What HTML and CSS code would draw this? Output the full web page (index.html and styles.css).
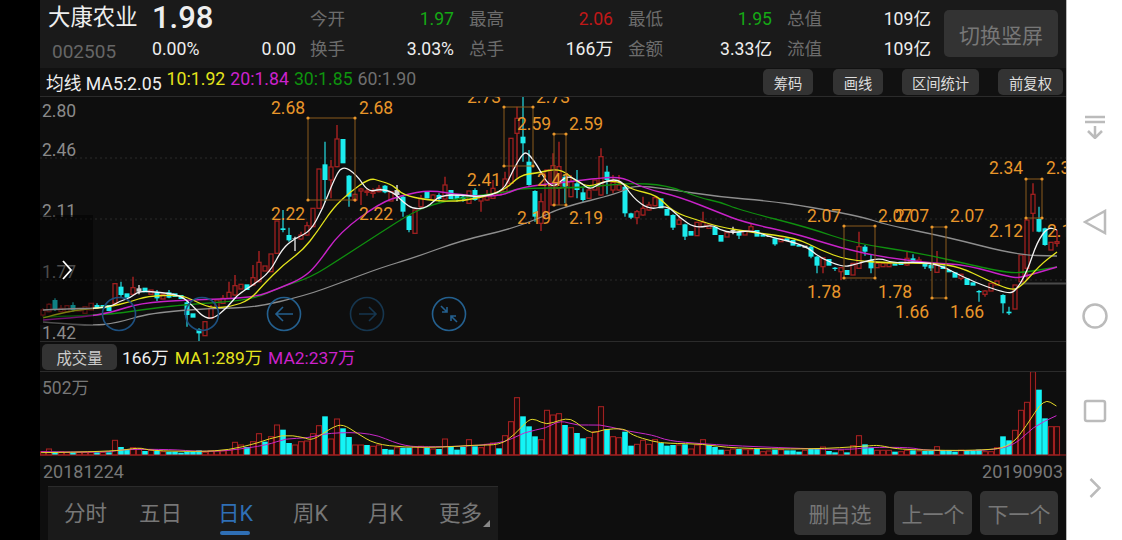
FILE: index.html
```html
<!DOCTYPE html>
<html lang="zh-CN">
<head>
    <meta charset="UTF-8">
    <title>大康农业</title>
    <link rel="stylesheet" href="styles.css">
</head>
<body>
    <div class="screen">
        <div class="main">
            <!-- 行情头部 -->
            <div class="quote">
                <div class="stock-id">
                    <div class="stock-name">大康农业</div>
                    <div class="stock-code">002505</div>
                </div>
                <div class="stock-price">
                    <div class="price">1.98</div>
                    <div class="change"><span>0.00%</span><span>0.00</span></div>
                </div>
                <div class="stats">
                    <div class="stat"><span class="stat-label">今开</span><span class="green">1.97</span></div>
                    <div class="stat"><span class="stat-label">最高</span><span class="red">2.06</span></div>
                    <div class="stat"><span class="stat-label">最低</span><span class="green">1.95</span></div>
                    <div class="stat"><span class="stat-label">总值</span><span>109亿</span></div>
                    <div class="stat"><span class="stat-label">换手</span><span>3.03%</span></div>
                    <div class="stat"><span class="stat-label">总手</span><span>166万</span></div>
                    <div class="stat"><span class="stat-label">金额</span><span>3.33亿</span></div>
                    <div class="stat"><span class="stat-label">流值</span><span>109亿</span></div>
                </div>
                <button class="btn rotate-btn">切换竖屏</button>
            </div>

            <!-- 均线 -->
            <div class="ma-bar">
                <div class="ma-values">
                    <span>均线 MA5:2.05</span>
                    <span class="yellow">10:1.92</span>
                    <span class="magenta">20:1.84</span>
                    <span class="dark-green">30:1.85</span>
                    <span class="gray">60:1.90</span>
                </div>
                <button class="tool-btn tool-chip">筹码</button>
                <button class="tool-btn tool-line">画线</button>
                <button class="tool-btn tool-range">区间统计</button>
                <button class="tool-btn tool-adjust">前复权</button>
            </div>

            <svg id="kline" class="kline" viewBox="40 97 1026 244"></svg>

            <!-- 成交量 -->
            <div class="vol-bar">
                <button class="tool-btn vol-btn">成交量</button>
                <span>166万</span>
                <span class="yellow">MA1:289万</span>
                <span class="magenta">MA2:237万</span>
            </div>
            <div class="vol-panel">
                <div class="vol-max">502万</div>
                <svg id="volume" class="volume" viewBox="40 372 1026 84"></svg>
            </div>
            <div class="dates"><span>20181224</span><span>20190903</span></div>

            <!-- 底部 -->
            <div class="bottom">
                <div class="tabs">
                    <div class="tab">分时</div>
                    <div class="tab">五日</div>
                    <div class="tab active">日K</div>
                    <div class="tab">周K</div>
                    <div class="tab">月K</div>
                    <div class="tab more">更多</div>
                </div>
                <div class="actions">
                    <button class="btn act-del">删自选</button>
                    <button class="btn act-nav">上一个</button>
                    <button class="btn act-nav">下一个</button>
                </div>
            </div>
        </div>

        <!-- 系统导航栏 -->
        <div class="navbar">
            <div class="nav-item">
                <svg width="24" height="24" viewBox="0 0 24 24"><path d="M2 2h20M2 7h20M12 11v12M5 16l7 7 7-7"/></svg>
            </div>
            <div class="nav-item">
                <svg width="24" height="26" viewBox="0 0 24 26"><path d="M22 2v22L2 13z"/></svg>
            </div>
            <div class="nav-item">
                <svg width="26" height="26" viewBox="0 0 26 26"><circle cx="13" cy="13" r="11.5"/></svg>
            </div>
            <div class="nav-item">
                <svg width="24" height="24" viewBox="0 0 24 24"><rect x="2" y="2" width="20" height="20" rx="2"/></svg>
            </div>
            <div class="nav-item nav-last">
                <svg width="12" height="20" viewBox="0 0 12 20"><path d="M1.5 1l9 9-9 9"/></svg>
            </div>
        </div>
    </div>
    <script src="chart.js"></script>
</body>
</html>
```

FILE: styles.css
```css
* {
    box-sizing: border-box;
}
body {
    margin: 0;
    background-color: #000;
    font-family: 'Roboto', 'Noto Sans CJK SC', sans-serif;
    color: #eee;
    overflow: hidden;
}
button {
    font-family: inherit;
    border: none;
    padding: 0;
}
.screen {
    display: flex;
    width: 1122px;
    height: 540px;
    padding-left: 40px;
}
.main {
    width: 1026px;
    height: 540px;
    background-color: #0e0e0e;
    display: flex;
    flex-direction: column;
}

/* 行情头部 */
.quote {
    height: 68px;
    flex: none;
    background-color: #1a1a1a;
    display: flex;
    align-items: flex-start;
    padding-left: 8px;
}
.stock-id {
    width: 104px;
}
.stock-name {
    font-size: 22.4px;
    line-height: 35px;
}
.stock-code {
    font-size: 19px;
    line-height: 34px;
    color: #666;
    padding-left: 4px;
}
.stock-price {
    width: 144px;
}
.price {
    font-size: 31px;
    font-weight: 500;
    line-height: 36px;
}
.change {
    display: flex;
    justify-content: space-between;
    font-size: 17.7px;
    line-height: 26px;
}
.stats {
    margin-left: 14px;
    margin-top: 4px;
    display: grid;
    grid-template-columns: repeat(4, 144px);
    column-gap: 15px;
    font-size: 17.6px;
    line-height: 30px;
}
.stat {
    display: flex;
    justify-content: space-between;
}
.stat-label {
    color: #6c6c6c;
}
.green {
    color: #15a815;
}
.red {
    color: #c01818;
}
.btn {
    background-color: #333;
    color: #777;
    border-radius: 5px;
    font-size: 21px;
}
.rotate-btn {
    width: 114px;
    height: 47px;
    margin-top: 10px;
    margin-left: 13px;
}

/* 均线 */
.ma-bar {
    height: 29px;
    flex: none;
    background-color: #111;
    border-bottom: 1px solid #2b2b2b;
    display: flex;
    align-items: center;
    padding-left: 6px;
    font-size: 17.7px;
}
.ma-values {
    display: flex;
    column-gap: 5px;
    width: 717px;
}
.yellow {
    color: #e4e41c;
}
.magenta {
    color: #cc22cc;
}
.dark-green {
    color: #0e930e;
}
.gray {
    color: #6f6f6f;
}
.tool-btn {
    height: 26px;
    background-color: #333;
    color: #ddd;
    border-radius: 5px;
    font-size: 14.3px;
}
.tool-chip {
    width: 50px;
}
.tool-line {
    width: 50px;
    margin-left: 20px;
}
.tool-range {
    width: 77px;
    margin-left: 19px;
}
.tool-adjust {
    width: 65px;
    margin-left: 19px;
}
.kline {
    display: block;
    width: 1026px;
    height: 244px;
    flex: none;
}
.kline text {
    font-size: 17.5px;
}

/* 成交量 */
.vol-bar {
    height: 31px;
    flex: none;
    border-top: 1px solid #2b2b2b;
    border-bottom: 1px solid #2b2b2b;
    display: flex;
    align-items: center;
    padding-left: 2px;
    column-gap: 6px;
    font-size: 17.4px;
}
.vol-btn {
    width: 75px;
    color: #ccc;
    font-size: 15.4px;
    margin-right: -1px;
}
.vol-panel {
    position: relative;
    height: 84px;
    flex: none;
}
.vol-max {
    position: absolute;
    left: 2px;
    top: 5px;
    font-size: 17.5px;
    line-height: 22px;
    color: #777;
}
.volume {
    display: block;
    width: 1026px;
    height: 84px;
}
.dates {
    height: 30px;
    flex: none;
    display: flex;
    justify-content: space-between;
    align-items: center;
    padding: 1px 3px 0;
    font-size: 18px;
    color: #777;
}

/* 底部 */
.bottom {
    flex: 1;
    display: flex;
    justify-content: space-between;
}
.tabs {
    width: 450px;
    margin-left: 8px;
    background-color: #1a1a1a;
    border-top: 1px solid #2b2b2b;
    display: flex;
    align-items: flex-start;
}
.tab {
    position: relative;
    flex: none;
    width: 75px;
    text-align: center;
    font-size: 21.5px;
    line-height: 54px;
    color: #777;
}
.tab.active {
    color: #2f6fb5;
}
.tab.active::after {
    content: "";
    position: absolute;
    left: 22px;
    top: 44px;
    width: 30px;
    height: 4px;
    border-radius: 2px;
    background-color: #2f6fb5;
}
.tab.more::after {
    content: "";
    position: absolute;
    left: 60px;
    top: 33px;
    border-left: 7px solid transparent;
    border-bottom: 7px solid #888;
}
.actions {
    display: flex;
    column-gap: 8px;
    padding: 5px 8px 0 0;
}
.actions .btn {
    height: 44px;
    width: 78px;
}
.actions .act-del {
    width: 92px;
}

/* 系统导航栏 */
.navbar {
    width: 56px;
    height: 540px;
    background-color: #fff;
    border-left: 1px solid #b9b9b9;
    padding-top: 80px;
}
.nav-item {
    height: 94.5px;
    display: flex;
    align-items: center;
    justify-content: center;
}
.nav-last {
    height: 60px;
}
.navbar svg {
    fill: none;
    stroke: #bbb;
    stroke-width: 2.5px;
}
```

FILE: chart.js
```js
// K线数据: [颜色, 实体上, 实体下, 最高, 最低] (y 为绘图坐标 * 3)
const candles = [
    ['r',645,660,640,665],['r',628,650,625,652],['c',615,645,610,648],['r',640,650,630,652],['r',632,650],['c',630,645,622,650],
    ['r',640,648],['r',635,655],['r',625,645],['c',630,640,625,642],['c',630,640],['c',630,648],
    ['r',566,625,565,630],['c',575,600,560,605],['c',595,608],['r',578,598,545,600],['w',580,590,570,598],['c',578,592],
    ['r',585,598],['c',592,610,585,618],['r',598,612],['c',592,608,585,610],['c',595,606],['c',600,612],
    ['c',622,660,615,695],['c',655,668],['c',703,715,700,738],['r',680,722],['r',640,670,630,672],['r',615,640],
    ['r',610,625,600,627],['r',592,610,560,612],['r',572,600,540,602],['r',568,582],['c',568,585],['r',548,570,510,572],
    ['r',502,560,468,562],['r',513,528],['r',477,530],['r',378,475],['c',400,405,345,412],['c',420,436,398,440],
    ['w',430,432,425,468],['r',420,432,410,434],['r',392,420,380,422],['r',340,395],['r',222,340],['c',208,255,140,320],
    ['r',216,255,195,310],['r',132,215,90,217],['c',132,205],['c',242,305,240,335],['r',298,315,296,320],['r',282,288,278,330],
    ['r',288,292,280,302],['r',290,295,280,308],['r',280,290,270,292],
    ['c',272,292,270,295],['r',290,318],['w',285,300,270,318],['c',305,350,303,365],['c',362,405,360,412],['r',345,415],
    ['r',310,335,300,337],['c',288,310],['r',300,315,298,317],['c',300,312,295,320],['r',270,312,245,314],['c',285,312],
    ['c',300,312,298,320],['c',305,312,303,320],['r',288,325],['c',285,315,280,317],['r',302,318,300,350],['r',305,315,285,317],
    ['r',280,310,255,312],['r',290,300],['r',252,290,230,292],['r',130,265],['r',70,115,35,250],['c',125,145,5,200],
    ['c',200,270,165,272],['c',288,365,286,380],['r',320,385,295,408],['r',225,370],['r',212,330,175,332],['r',215,280,140,330],
    ['c',245,275,240,325],['r',260,305,240,307],['c',265,285,225,310],['c',292,315,280,320],['r',285,310,270,312],['r',255,285],
    ['r',185,300,160,302],['c',230,255,212,298],['r',262,285,240,295],['r',270,285,240,287],['c',275,355,273,365],['c',355,368,353,372],
    ['r',350,368,345,388],['r',340,360,305,362],['r',330,345,320,347],['r',308,332,305,334],['c',310,340],['c',342,362],
    ['c',360,398,358,405],['r',375,388,360,390],['c',388,425,386,435],['c',408,422],['r',382,422],['r',382,395,350,397],
    ['r',390,400],['c',395,420],['c',420,440],['r',413,426],['w',405,410,395,418],['c',410,422,408,432],
    ['r',408,420],['r',395,408,385,410],['c',405,425],['c',418,425],['w',422,426],['c',430,448,428,452],
    ['r',430,440],['c',430,438],['c',435,452],['c',450,455],['w',452,458],['c',455,485,450,490],
    ['c',485,512,483,535],['r',488,515,486,535],['c',492,512],['c',518,522,516,528],['r',518,530,516,555],['c',525,540],
    ['r',505,540],['r',455,520,410,522],['c',455,470,450,482],['c',495,520,480,535],['r',505,518],['r',505,515],
    ['r',505,515],['c',505,512],['c',500,510],['r',490,510,470,512],['c',490,500,478,502],['r',495,502,485,504],
    ['c',505,515,503,522],['c',510,520,508,528],['r',510,532,468,534],['c',512,522],['c',525,532],['c',532,548],
    ['r',538,550,536,555],['c',550,570],['c',562,572],['c',588,592,585,620],['r',588,598,586,605],['r',565,588],
    ['r',558,570],['c',600,625,598,655],['c',650,655,635,660],['r',570,642],['r',480,560],['r',375,520,373,555],
    ['r',298,355,265,410],['c',372,410,335,412],['c',400,450,398,452],['r',442,465],['r',440,445,405,455]
];

// 均线
const maLines = [
    ['#8e8e8e', 1.3, [[43,322],[90,326],[117,323],[150,313],[213,308],[253,308],[307,295],[340,283],[380,268],[413,258],[463,240],[507,230],[540,218],[560,208],[620,193],[633,185],[667,189],[720,197],[770,201],[810,207],[863,217],[887,225],[947,237],[1017,255],[1057,256]]],
    ['#0f8f0f', 1.3, [[43,317],[107,315],[140,310],[180,305],[253,300],[280,287],[310,278],[343,257],[380,233],[413,212],[440,202],[480,195],[507,192],[523,188],[580,188],[627,183],[667,185],[700,198],[720,202],[740,210],[810,228],[853,243],[920,253],[980,267],[1010,273],[1027,272],[1057,267]]],
    ['#c822c8', 1.4, [[43,320],[83,317],[110,313],[140,303],[187,300],[253,298],[280,288],[303,278],[317,265],[340,232],[380,203],[403,195],[430,190],[460,195],[500,197],[520,187],[567,182],[600,178],[623,177],[643,188],[680,197],[720,213],[743,222],[797,234],[840,248],[887,258],[933,263],[967,265],[1013,278],[1023,277],[1057,267]]],
    ['#e4e41c', 1.3, [[43,318],[67,311],[108,307],[130,302],[147,296],[180,295],[193,300],[210,308],[230,307],[250,300],[263,285],[283,265],[303,250],[317,232],[333,208],[350,192],[370,178],[380,181],[393,185],[403,195],[427,200],[460,202],[503,192],[520,175],[537,173],[560,168],[577,182],[590,187],[607,180],[623,183],[633,190],[657,195],[673,212],[697,220],[720,227],[750,232],[797,238],[820,250],[847,260],[887,263],[933,263],[960,267],[987,280],[1010,290],[1020,288],[1040,265],[1057,252]]],
    ['#f4f4f4', 1.3, [[43,310],[60,309],[108,308],[120,301],[130,298],[139,291],[157,292],[180,295],[192,305],[203,317],[213,319],[227,308],[237,295],[253,285],[270,272],[282,249],[295,238],[310,232],[323,208],[333,182],[342,165],[357,175],[368,192],[380,189],[393,192],[403,202],[413,209],[427,208],[440,195],[463,195],[480,197],[503,192],[513,170],[523,153],[528,153],[537,165],[547,183],[555,187],[567,175],[580,182],[590,190],[600,183],[620,178],[633,198],[650,210],[667,205],[680,218],[695,228],[713,225],[720,230],[733,233],[752,230],[770,237],[805,245],[820,258],[843,267],[853,265],[863,262],[880,258],[893,263],[920,262],[940,265],[963,277],[987,287],[1007,293],[1015,292],[1027,272],[1037,242],[1048,227],[1057,230]]]
];

// 最高最低标注框
const boxes = [
    [308,118,355,200], [504,107,533,166], [554,134,566,205],
    [844,226,875,278], [932,227,946,298], [1026,179,1042,218]
];
const marks = [
    [271,114,'2.68'],[359,114,'2.68'],[271,220,'2.22'],[359,220,'2.22'],
    [467,103,'2.73'],[536,103,'2.73'],[467,186,'2.41'],[537,186,'2.41'],
    [517,130,'2.59'],[569,130,'2.59'],[517,224,'2.19'],[569,224,'2.19'],
    [807,222,'2.07'],[878,222,'2.07'],[895,222,'2.07'],[950,222,'2.07'],
    [807,298,'1.78'],[878,298,'1.78'],[895,318,'1.66'],[950,318,'1.66'],
    [989,174,'2.34'],[1046,174,'2.34'],[989,237,'2.12'],[1047,237,'2.12']
];
const axis = [[42,117,'2.80'],[42,156,'2.46'],[42,217,'2.11'],[42,278,'1.77'],[42,339,'1.42']];

// 成交量 (负数为绿柱)
const volumes = [
    10,18,-10,10,8,-8,8,8,8,-8,8,-8,44,-24,-15,22,20,-12,14,-12,10,-10,-10,-7,-10,-10,-14,8,12,12,12,14,38,30,-24,40,64,-40,55,90,
    -76,-36,30,40,42,64,88,-116,48,108,-80,-54,30,30,-30,26,30,-18,-16,22,-22,-22,25,26,-22,18,-18,48,-24,-16,-24,46,-26,22,32,36,-20,58,100,172,
    -116,-86,-56,46,134,120,124,-90,82,-66,-50,52,70,145,-78,55,52,-70,-28,32,44,32,46,-36,-28,-30,30,-32,18,30,46,-30,-24,-16,14,18,-18,16,16,
    -18,10,12,-16,16,-14,-14,-10,14,-18,-20,24,-12,-8,14,-8,28,58,-32,-22,14,14,14,-10,10,14,-14,12,-12,-12,25,-14,-12,-10,14,-12,-12,-16,10,10,22,
    -56,-44,74,134,158,250,-196,-110,85,85
];
const volYellow = [
    [115,338],[320,335],[390,322],[420,332],[560,335],[640,330],[720,310],[790,283],[850,292],[875,302],[930,262],[960,252],[1000,280],[1050,312],[1130,322],[1240,322],[1330,315],[1400,315],[1440,285],[1480,238],[1500,238],[1530,255],[1568,240]
].map(p => [p[0] / 2.8, 340 + p[1] / 3]).concat([
    [30,235],[60,260],[90,282],[120,268],[180,265],[200,285],[260,305],[300,310],[400,312],[480,325],[700,328],[860,318],[890,315],[950,330],[1200,332],[1260,315],[1300,260],[1350,175],[1385,198]
].map(p => [560 + p[0] / 2.79, 340 + p[1] / 3]));
const volMagenta = [
    [115,335],[300,338],[340,328],[480,328],[560,335],[640,332],[750,315],[800,295],[860,295],[920,278],[1040,278],[1120,315],[1180,322],[1400,315],[1470,275],[1530,265],[1568,240]
].map(p => [p[0] / 2.8, 340 + p[1] / 3]).concat([
    [50,258],[110,252],[180,272],[260,285],[300,302],[400,312],[540,320],[800,330],[860,322],[980,322],[1020,332],[1200,332],[1270,315],[1320,260],[1385,227]
].map(p => [560 + p[0] / 2.79, 340 + p[1] / 3]));

const RED = '#a02020';
const CYAN = '#1cecee';
const ORANGE = '#e8962a';
const BLUE = '#1d5080';

// 折线取中点做平滑
function smooth(pts) {
    let d = 'M' + pts[0][0] + ' ' + pts[0][1];
    for (let i = 1; i < pts.length - 1; i++) {
        const mx = (pts[i][0] + pts[i + 1][0]) / 2;
        const my = (pts[i][1] + pts[i + 1][1]) / 2;
        d += 'Q' + pts[i][0] + ' ' + pts[i][1] + ' ' + mx + ' ' + my;
    }
    const last = pts[pts.length - 1];
    return d + 'L' + last[0] + ' ' + last[1];
}

function line(pts, color, width) {
    return `<path d="${smooth(pts)}" fill="none" stroke="${color}" stroke-width="${width}" stroke-linejoin="round"/>`;
}

function drawKline() {
    let s = '';
    // 网格
    [158, 219, 280].forEach(y => {
        s += `<line x1="40" x2="1066" y1="${y}" y2="${y}" stroke="#2a2a2a" stroke-dasharray="2 3"/>`;
    });
    axis.forEach(a => {
        s += `<text x="${a[0]}" y="${a[1]}" fill="#8a8a8a">${a[2]}</text>`;
    });

    candles.forEach((c, i) => {
        const x = 43 + 6 * i;
        const top = 95 + c[1] / 3;
        const bot = 95 + c[2] / 3;
        const hi = c[3] === undefined ? top : 95 + c[3] / 3;
        const lo = c[4] === undefined ? bot : 95 + c[4] / 3;
        const color = c[0] === 'r' ? RED : c[0] === 'w' ? '#cfcfcf' : CYAN;
        if (hi < top || lo > bot) {
            s += `<line x1="${x}" x2="${x}" y1="${hi}" y2="${lo}" stroke="${c[0] === 'c' ? '#1fb4ba' : color}" stroke-width="1.5"/>`;
        }
        if (c[0] === 'r') {
            s += `<rect x="${x - 2}" y="${top}" width="4" height="${bot - top}" fill="#0e0e0e" stroke="${RED}" stroke-width="1.3"/>`;
        } else {
            s += `<rect x="${x - 2.5}" y="${top}" width="5" height="${bot - top}" fill="${color}"/>`;
        }
    });

    // 当前价
    s += '<line x1="1020" x2="1066" y1="283.5" y2="283.5" stroke="#4a4a4a" stroke-width="2"/>';

    maLines.forEach(m => {
        s += line(m[2], m[0], m[1]);
    });

    boxes.forEach(b => {
        s += `<rect x="${b[0]}" y="${b[1]}" width="${b[2] - b[0]}" height="${b[3] - b[1]}" fill="none" stroke="#8a5a1c"/>`;
        [[b[0], b[1]], [b[2], b[1]], [b[0], b[3]], [b[2], b[3]]].forEach(p => {
            s += `<circle cx="${p[0]}" cy="${p[1]}" r="1.6" fill="${ORANGE}"/>`;
        });
    });
    marks.forEach(m => {
        s += `<text x="${m[0]}" y="${m[1]}" fill="${ORANGE}">${m[2]}</text>`;
    });

    // 左侧展开
    s += '<rect x="40" y="215" width="53" height="110" fill="#000" fill-opacity="0.45"/>';
    s += '<path d="M63 261l8 9-8 9" fill="none" stroke="#fff" stroke-width="1.8"/>';

    // 缩放按钮
    const c = (x, color) => `<circle cx="${x}" cy="314" r="16.5" fill="none" stroke="${color}" stroke-width="1.6"/>`;
    s += c(119, BLUE) + c(202, BLUE) + c(284, '#24608f') + c(367, '#16364f') + c(449, '#24608f');
    s += '<path d="M276 314h17M283 307l-7 7 7 7" fill="none" stroke="#24608f" stroke-width="1.6"/>';
    s += '<path d="M359 314h17M369 307l7 7-7 7" fill="none" stroke="#16364f" stroke-width="1.6"/>';
    s += '<path d="M441 306l6 6M447 307v5h-5M457 322l-6-6M451 321v-5h5" fill="none" stroke="#24608f" stroke-width="1.6"/>';

    document.getElementById('kline').innerHTML = s;
}

function drawVolume() {
    let s = '';
    const n = volumes.length;
    volumes.forEach((v, i) => {
        const x = 1057 - 6 * (n - 1 - i);
        const h = Math.abs(v) / 3;
        if (v > 0) {
            s += `<rect x="${x - 2.5}" y="${455 - h}" width="5" height="${h}" fill="#1c0a0a" stroke="${RED}" stroke-width="1.1"/>`;
        } else {
            s += `<rect x="${x - 2.8}" y="${455 - h}" width="5.6" height="${h}" fill="#14f4f6"/>`;
        }
    });
    s += `<line x1="40" x2="1066" y1="455" y2="455" stroke="${RED}" stroke-width="1.1"/>`;
    s += line(volMagenta, '#c828c8', 1);
    s += line(volYellow, '#e4d828', 1);
    document.getElementById('volume').innerHTML = s;
}

drawKline();
drawVolume();
```
